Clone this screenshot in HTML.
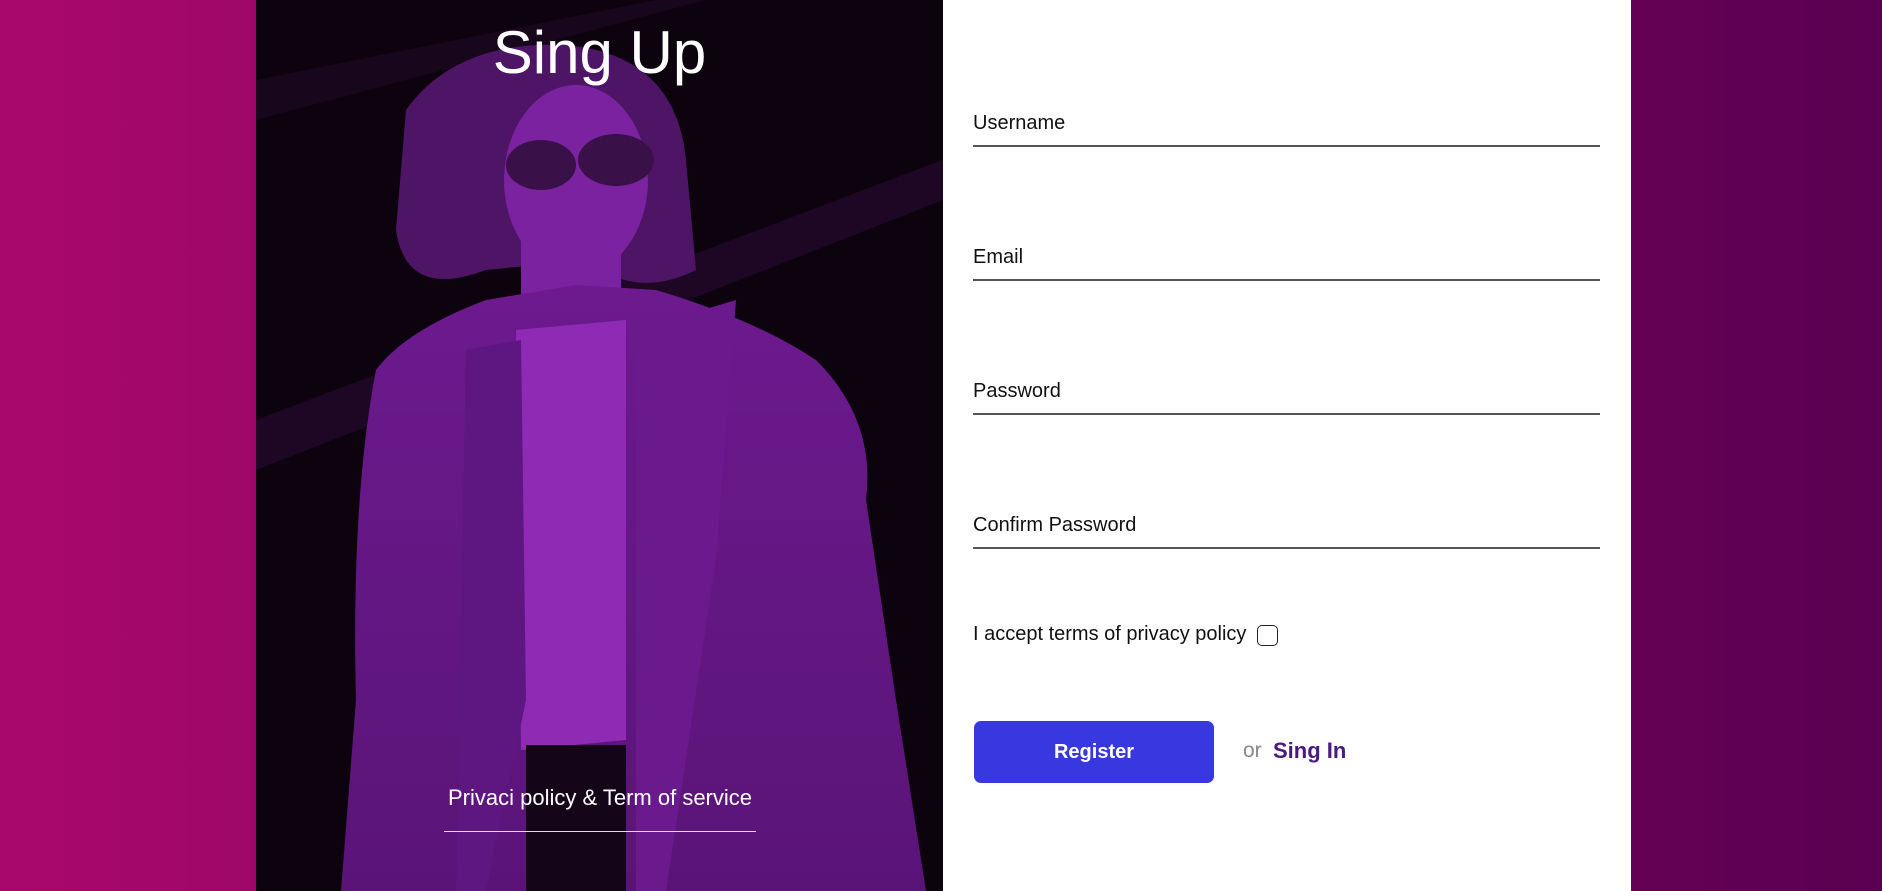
<!DOCTYPE html>
<html><head><meta charset="utf-8"><style>
html,body{margin:0;padding:0;width:1882px;height:891px;overflow:hidden;font-family:"Liberation Sans",Arial,sans-serif}
body{background:linear-gradient(90deg,#a9086b 0%,#8a0462 40%,#5a0052 100%);position:relative}
.left{position:absolute;left:256px;top:0;width:687px;height:891px;background:#0d030f;overflow:hidden}
.left svg{position:absolute;left:0;top:0}
.title{position:absolute;left:0;width:687px;top:18px;text-align:center;color:#fff;font-size:60px}
.pp{position:absolute;left:188px;width:312px;top:785px;text-align:center;color:#fff;font-size:22px;padding-bottom:20px;border-bottom:1px solid #e6d6ee}
.right{position:absolute;left:943px;top:0;width:688px;height:891px;background:#fff}
.f{position:absolute;left:30px;width:627px;border-bottom:2px solid #555;font-size:20px;color:#111;padding-bottom:10px}
.cb{position:absolute;left:30px;top:623px;font-size:20px;color:#111}
.box{position:absolute;left:314px;top:625px;width:19px;height:19px;border:1.5px solid #222;border-radius:5px}
.btn{position:absolute;left:31px;top:721px;width:240px;height:62px;background:#3838e0;border-radius:7px;color:#fff;font-weight:bold;font-size:20px;text-align:center;line-height:62px}
.or{position:absolute;left:300px;top:739px;font-size:21px;color:#888}
.si{position:absolute;left:330px;top:738px;font-size:22px;font-weight:bold;color:#4a1a80}
</style></head><body>
<div class="left">
<svg width="687" height="891" viewBox="0 0 687 891">
<defs><linearGradient id="c" x1="0" y1="0" x2="0" y2="1"><stop offset="0" stop-color="#6c1a8e"/><stop offset="1" stop-color="#5a1478"/></linearGradient></defs>
<polygon points="0,420 687,160 687,200 0,470" fill="#2a0a32" opacity=".6"/>
<polygon points="0,80 400,0 450,0 0,120" fill="#1e0824" opacity=".6"/>
<path d="M150,110 Q200,40 310,45 Q420,55 430,160 L440,270 Q380,300 330,260 L230,270 Q150,300 140,230 Z" fill="#4e1466"/>
<ellipse cx="320" cy="180" rx="72" ry="95" fill="#7a22a0"/>
<ellipse cx="285" cy="165" rx="35" ry="25" fill="#3a1048"/>
<ellipse cx="360" cy="160" rx="38" ry="26" fill="#3a1048"/>
<rect x="265" y="240" width="100" height="90" fill="#7a22a0"/>
<path d="M120,370 Q150,330 230,300 L320,285 L400,290 Q500,320 560,360 Q620,420 610,500 L640,700 L670,891 L85,891 L100,700 Q95,500 120,370 Z" fill="url(#c)"/>
<path d="M260,330 L370,320 L370,740 L265,750 Z" fill="#8f2ab5"/>
<rect x="270" y="745" width="100" height="146" fill="#150518"/>
<path d="M380,330 L480,300 L460,560 L410,891 L380,891 Z" fill="#6a1a8c"/>
<path d="M210,350 L265,340 L270,700 L230,891 L200,891 Z" fill="#5e1680"/>
</svg>
<div class="title">Sing Up</div>
<div class="pp">Privaci policy &amp; Term of service</div>
</div>
<div class="right">
<div class="f" style="top:112px">Username</div>
<div class="f" style="top:246px">Email</div>
<div class="f" style="top:380px">Password</div>
<div class="f" style="top:514px">Confirm Password</div>
<div class="cb">I accept terms of privacy policy</div>
<div class="box"></div>
<div class="btn">Register</div>
<div class="or">or</div>
<div class="si">Sing In</div>
</div>
</body></html>
